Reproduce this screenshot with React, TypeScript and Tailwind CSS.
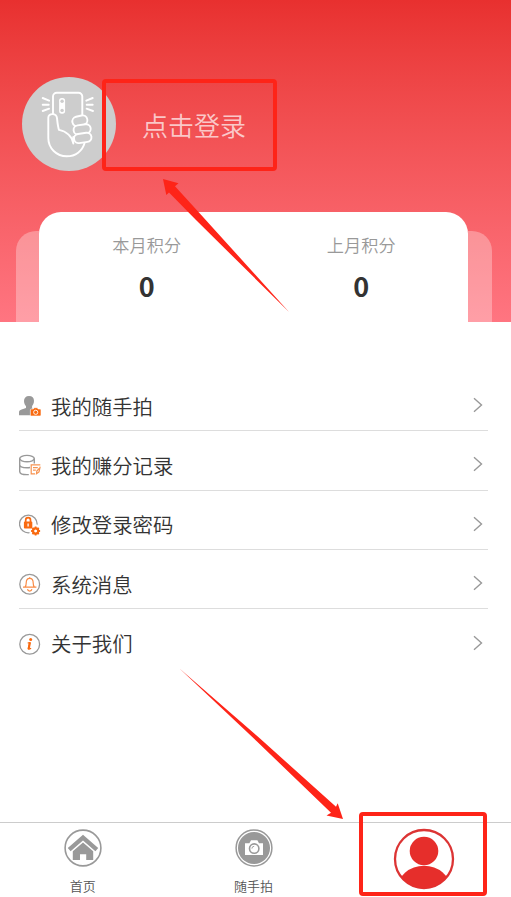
import React from 'react';

const UserCameraIcon = () => (
  <svg viewBox="0 0 22 22" className="w-[22px] h-[22px]">
    <path d="M10 .9c3.200 0 5 1.900 5 4.900 0 2.300-.9 4.200-1.900 5.300v2.300l4 1.400V20.200H0v-2.800c0-1.600 1-2.400 2.600-2.900l4.400-1.500v-2C5.900 9.900 5 8.200 5 5.900c0-3 1.800-5 5-5z" fill="#999" />
    <path d="M12.300 14h2l.7-1.300h3.400l.7 1.300h2c.5 0 .9.4.9.9v5.200c0 .5-.4.900-.9.900h-8.800a.9.9 0 0 1-.9-.9v-5.200c0-.5.4-.9.900-.9z" fill="#f96a10" stroke="#fff" strokeWidth="0.600" />
    <circle cx="16.700" cy="17.300" r="2.100" fill="none" stroke="#fff" strokeWidth="0.900" />
  </svg>
);

const RecordsIcon = () => (
  <svg viewBox="0 0 22 22" className="w-[22px] h-[22px]" fill="none" strokeWidth="1.400">
    <g stroke="#999">
      <ellipse cx="8" cy="4.600" rx="7.300" ry="3.200" />
      <path d="M.7 4.600v12.800c0 1.800 3.200 3.200 7.300 3.200h1.800M15.300 4.600V9.600M.7 10.700c0 1.800 3.200 3.100 7.300 3.100 1.100 0 2.100-.1 3-.3" />
    </g>
    <g stroke="#f79350">
      <path d="M20.500 10.700h-8.300v9h4.800l3.500-3.700z" fill="#fff" stroke="none" />
      <path d="M21.300 10.900h-9.100v8.900h3.800M14 13.600h4.800M14 16.200h2.800M21.200 12.700l-1.200 5.200-2.500 1.900.3-2.700 2.700-3" strokeWidth="1.200" />
    </g>
  </svg>
);

const PasswordIcon = () => (
  <svg viewBox="0 0 22 22" className="w-[22px] h-[22px]">
    <path d="M18.100 10.600A8.800 8.800 0 1 0 10.500 18.700" fill="none" stroke="#999" strokeWidth="1.300" />
    <rect x="4.900" y="7.600" width="8.400" height="6.800" rx="1" fill="#f96a10" />
    <path d="M6.700 8V6.100a2.400 2.400 0 0 1 4.800 0v1.900" fill="none" stroke="#f96a10" strokeWidth="1.700" />
    <path d="M9.100 9.500v3" stroke="#fff" strokeWidth="1.300" />
    <circle cx="16.600" cy="17" r="2.600" fill="none" stroke="#f96a10" strokeWidth="2.200" />
    <path d="M16.600 12.500v2M16.600 19.500v2M12.100 17h2M19.100 17h2M13.400 13.800l1.400 1.400M18.400 18.800l1.400 1.400M19.800 13.800l-1.400 1.400M14.800 18.800l-1.400 1.400" stroke="#f96a10" strokeWidth="1.800" />
  </svg>
);

const BellIcon = () => (
  <svg viewBox="0 0 22 22" className="w-[22px] h-[22px]" fill="none">
    <circle cx="10.700" cy="11.300" r="9.900" stroke="#999" strokeWidth="1.300" />
    <g stroke="#f98b45" strokeWidth="1.200">
      <path d="M4 14.200h13.400M5.900 14.200c1.200-1 1.300-2.300 1.300-4.300 0-2.700 1.300-4.600 3.500-4.600s3.500 1.900 3.500 4.600c0 2 .1 3.300 1.300 4.300" />
      <path d="M10.700 5.500V4.200M8.500 16.200c.2 1.300 1.100 1.900 2.200 1.900s2-.6 2.200-1.900" />
    </g>
  </svg>
);

const AboutIcon = () => (
  <svg viewBox="0 0 22 22" className="w-[22px] h-[22px]" fill="none">
    <circle cx="10.700" cy="11.300" r="9.900" stroke="#999" strokeWidth="1.300" />
    <circle cx="11.700" cy="6.500" r="1.500" fill="#f96a10" />
    <path d="M8.700 9.900h1.900l-1.300 5.600c-.2.900.8 1 2.800-.2" stroke="#f96a10" strokeWidth="1.300" />
    <path d="M11.100 9.300l-1.500 6.700" stroke="#f96a10" strokeWidth="2" />
  </svg>
);

const MENU = [
  { label: '我的随手拍', icon: UserCameraIcon },
  { label: '我的赚分记录', icon: RecordsIcon },
  { label: '修改登录密码', icon: PasswordIcon },
  { label: '系统消息', icon: BellIcon },
  { label: '关于我们', icon: AboutIcon },
];

const SCORES = [
  { label: '本月积分', value: 0 },
  { label: '上月积分', value: 0 },
];

const Avatar = () => (
  <svg viewBox="0 0 94 94" className="w-[94px] h-[94px] shrink-0" fill="none">
    <circle cx="47" cy="47" r="47" fill="#cdcdcd" />
    <g stroke="#fff" strokeWidth="1.900" strokeLinecap="round" strokeLinejoin="round">
      <path d="M31 37V19.500a3.800 3.800 0 0 1 3.800-3.800h21.700a3.800 3.800 0 0 1 3.800 3.800V38" />
      {/* palm and thumb */}
      <path d="M51.300 60v6.500c-.8-6.500-7-12.500-14.300-13.600-1.200-3.300-1.500-7.400-2-11.700-.6-5.300-8.700-5.300-8.700-.4V61c0 10.200 8.200 18.300 18.400 18.300 8.800 0 15.700-5.300 17.900-13.300" />
      {/* fingers */}
      <rect x="50.300" y="39" width="15.200" height="9.600" rx="4.800" transform="rotate(-13 58 44)" />
      <rect x="51.500" y="47.800" width="17.200" height="9.200" rx="4.600" transform="rotate(-8 60 52)" fill="#cdcdcd" />
      <rect x="52" y="56.300" width="17.500" height="9.200" rx="4.600" transform="rotate(-8 61 61)" fill="#cdcdcd" />
      <path d="M20.700 21l6.400 2.700M20.700 27.700h6M20.700 34l6.400-2.300M70.700 21l-6.400 2.700M70.700 27.700h-6M71 34l-6.400-2.300" />
    </g>
    <rect x="37.100" y="21" width="6" height="15.700" rx="2.600" fill="#fff" />
    <circle cx="40.100" cy="24.200" r="1.700" fill="#cdcdcd" />
    <circle cx="40.100" cy="33.400" r="1.700" fill="#cdcdcd" />
  </svg>
);

const HomeIcon = () => (
  <svg viewBox="0 0 38 38" className="w-[38px] h-[38px]" fill="none">
    <circle cx="19" cy="19" r="17.900" stroke="#999" strokeWidth="1.600" />
    <path d="M5.200 20.600L19 8.700l13.800 11.900" stroke="#999" strokeWidth="4.300" />
    <path d="M19 13.600l10.200 8.700V31h-7v-5.800h-6.200V31H8.800v-8.700z" fill="#999" />
  </svg>
);

const CameraIcon = () => (
  <svg viewBox="0 0 38 38" className="w-[38px] h-[38px]">
    <circle cx="19" cy="19" r="17.900" fill="none" stroke="#999" strokeWidth="1.500" />
    <circle cx="19" cy="19" r="16" fill="#999" />
    <path d="M10 14.200h4.400l1.600-2.900h6.400l1.600 2.900h4v11.800H10z" fill="#fff" />
    <circle cx="19.200" cy="19.600" r="4.700" fill="#fff" stroke="#999" strokeWidth="1.600" />
    <path d="M16.900 19.600a2.300 2.300 0 0 1 2.300-2.300" fill="none" stroke="#999" strokeWidth="0.900" />
  </svg>
);

const ProfileIcon = () => (
  <svg viewBox="0 0 62 62" className="w-[62px] h-[62px]">
    <defs>
      <clipPath id="profile-clip">
        <circle cx="31" cy="31" r="29.500" />
      </clipPath>
    </defs>
    <circle cx="31" cy="31" r="29" fill="#fff" stroke="#dc3434" strokeWidth="2.300" />
    <circle cx="31" cy="23" r="14.300" fill="#e62e2b" />
    <ellipse cx="31" cy="60.500" rx="26.500" ry="22.700" fill="#e62e2b" clipPath="url(#profile-clip)" />
  </svg>
);

export default function App() {
  return (
    <div className="relative flex flex-col w-[511px] h-[897px] overflow-hidden bg-white font-['Noto_Sans_CJK_SC',sans-serif]">
      {/* Header */}
      <header className="flex flex-col h-[322px] shrink-0 bg-linear-to-b from-[#e8302f] to-[#ff7581]">
        <div className="flex items-center h-[212px] pt-[35px] pl-[22px] gap-[26px]">
          <Avatar />
          <span className="pt-[2px] text-[26px] leading-[38px] font-[350] text-white/70">点击登录</span>
        </div>
        <div className="flex flex-1 items-end pl-[16px]">
          <div className="w-[23px] h-[91px] rounded-tl-[20px] bg-white/30" />
          <div className="flex w-[429px] h-[110px] rounded-t-[22px] bg-white">
            {SCORES.map((score) => (
              <div key={score.label} className="flex-1 flex flex-col items-center pt-[20px] pl-px">
                <span className="text-[17.200px] leading-[26px] font-[350] text-[#999]">{score.label}</span>
                <span className="mt-[10px] text-[27px] leading-[36px] font-bold text-[#333]">{score.value}</span>
              </div>
            ))}
          </div>
          <div className="w-[24px] h-[91px] rounded-tr-[20px] bg-white/30" />
        </div>
      </header>

      {/* Menu */}
      <ul className="flex flex-col pt-[50px] pl-[19px] pr-[23px]">
        {MENU.map(({ label, icon: Icon }) => (
          <li key={label} className="flex items-center h-[59.300px] pt-[8px] border-b border-[#ddd] last:border-b-0">
            <span className="pt-[2px]">
              <Icon />
            </span>
            <span className="ml-[10px] pt-px text-[20.400px] leading-[30px] font-[350] text-[#333]">{label}</span>
            <svg viewBox="0 0 10 16" className="ml-auto mr-[5px] w-[10px] h-[16px]" fill="none">
              <path d="M1 1.300L8.500 8 1 14.700" stroke="#999" strokeWidth="1.400" />
            </svg>
          </li>
        ))}
      </ul>

      {/* Tab bar */}
      <nav className="mt-auto flex h-[75px] border-t border-[#ccc] text-[13px] leading-[18px] font-[350] text-[#555]">
        <div className="flex-1 flex flex-col items-center pt-[6px] pr-[5px]">
          <HomeIcon />
          <span className="mt-[10px]">首页</span>
        </div>
        <div className="flex-1 flex flex-col items-center pt-[6px] pr-[5px]">
          <CameraIcon />
          <span className="mt-[10px]">随手拍</span>
        </div>
        <div className="flex-1 flex flex-col items-center pt-[5px] pr-[4px]">
          <ProfileIcon />
        </div>
      </nav>

      {/* Callouts drawn over the screen */}
      <div className="absolute left-[102px] top-[79px] w-[175px] h-[92px] rounded-[4px] border-4 border-[#fe2418]" />
      <div className="absolute left-[359px] top-[812px] w-[128px] h-[84px] rounded-[4px] border-4 border-[#fe2418]" />
      <svg viewBox="0 0 511 897" className="absolute inset-0 w-[511px] h-[897px] pointer-events-none" fill="#fe2418">
        <path d="M163 179l15.500 4.300-3.500 2.900 26 28.500L289 312l-93-92-27-27.500-2.700 2.500z" />
        <path d="M179.500 668.500L260 738.500l76 68.300 1.700-3.500 5.300 15.700-16.500-3.500 4.500-2.700L257 741.500z" />
      </svg>
    </div>
  );
}
